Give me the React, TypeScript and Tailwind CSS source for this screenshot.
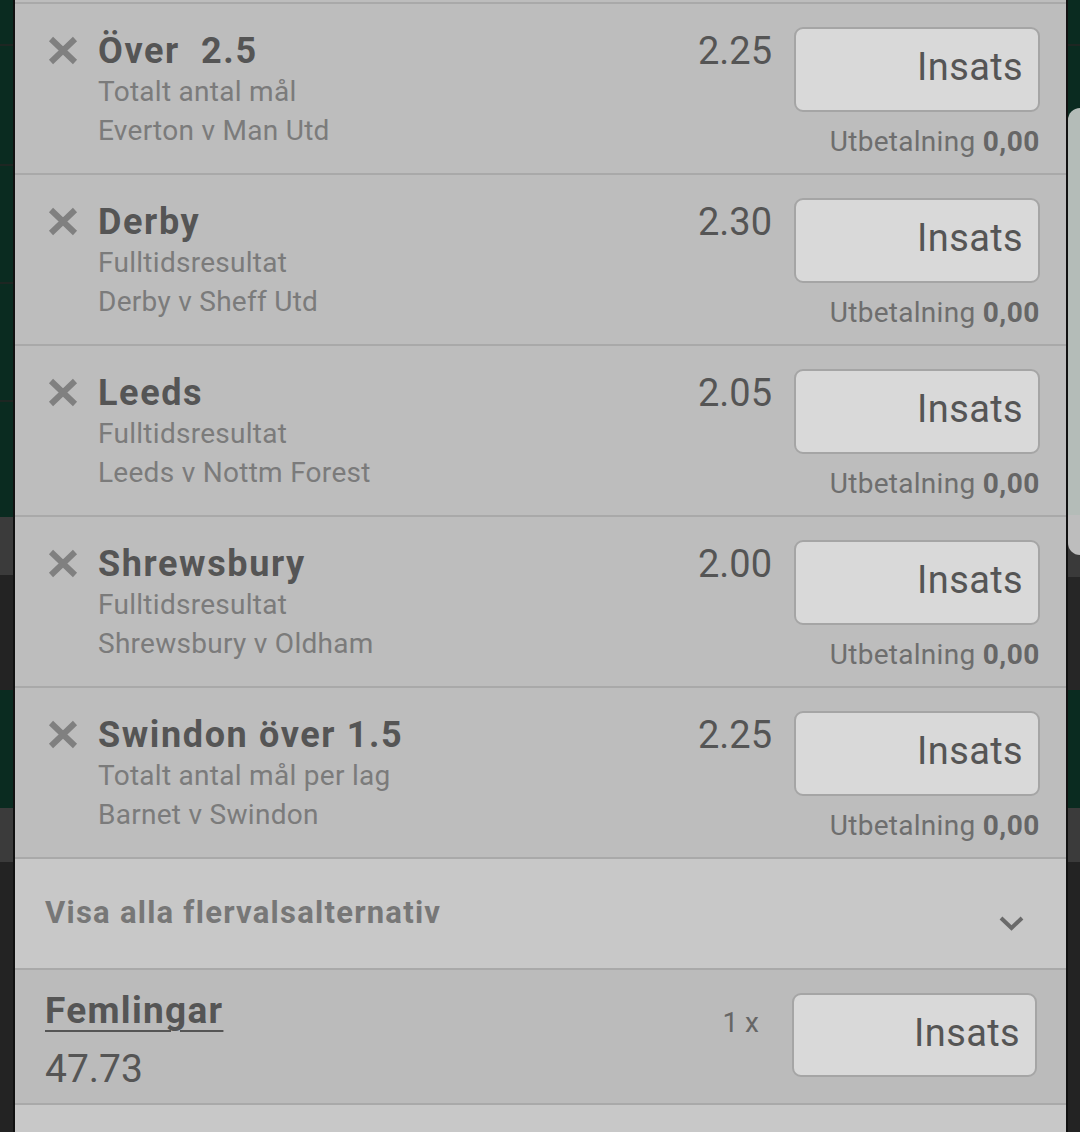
import React from 'react';

interface Selection {
  title: string;
  market: string;
  event: string;
  odds: string;
}

const selections: Selection[] = [
  { title: 'Över  2.5', market: 'Totalt antal mål', event: 'Everton v Man Utd', odds: '2.25' },
  { title: 'Derby', market: 'Fulltidsresultat', event: 'Derby v Sheff Utd', odds: '2.30' },
  { title: 'Leeds', market: 'Fulltidsresultat', event: 'Leeds v Nottm Forest', odds: '2.05' },
  { title: 'Shrewsbury', market: 'Fulltidsresultat', event: 'Shrewsbury v Oldham', odds: '2.00' },
  { title: 'Swindon över 1.5', market: 'Totalt antal mål per lag', event: 'Barnet v Swindon', odds: '2.25' },
];

function RemoveIcon() {
  return (
    <svg width="30" height="29" viewBox="0 0 30 29" className="shrink-0">
      <path d="M3 3 L27 26 M27 3 L3 26" stroke="#808080" strokeWidth="6" fill="none" />
    </svg>
  );
}

function StakeBox({ className = '' }: { className?: string }) {
  return (
    <div
      className={`flex items-center justify-end pr-[15px] pb-[4px] bg-[#d9d9d9] border-2 border-[#a5a5a5] rounded-[9px] ${className}`}
    >
      <span className="text-[38px] tracking-[0.01em] text-[#555555]">Insats</span>
    </div>
  );
}

function SelectionRow({ sel }: { sel: Selection }) {
  return (
    <div className="h-[171px] border-t-2 border-[#a9a9a9] flex items-start pl-[33px] pr-[26px]">
      <div className="mt-[32px]">
        <RemoveIcon />
      </div>
      <div className="ml-[20px] mt-[27px] flex-1 min-w-0">
        <div className="text-[36px] leading-[40px] font-bold tracking-[0.045em] text-[#555555] whitespace-pre">
          {sel.title}
        </div>
        <div className="text-[28px] leading-[39px] tracking-[0.01em] text-[#7b7b7b] mt-[1px]">{sel.market}</div>
        <div className="text-[28px] leading-[39px] tracking-[0.01em] text-[#7b7b7b]">{sel.event}</div>
      </div>
      <div className="mt-[26px] mr-[22px] text-[38px] leading-[42px] text-[#555555]">{sel.odds}</div>
      <div className="mt-[23px] flex flex-col items-end">
        <StakeBox className="w-[246px] h-[85px]" />
        <div className="mt-[14px] text-[28px] leading-[32px] tracking-[0.01em] text-[#6e6e6e]">
          Utbetalning <span className="font-bold tracking-[0.02em] text-[#666666]">0,00</span>
        </div>
      </div>
    </div>
  );
}

export default function App() {
  return (
    <div className="w-[1080px] h-[1132px] overflow-hidden flex font-['Roboto',sans-serif]">
      {/* background page, left edge */}
      <div className="w-[13px] flex flex-col">
        <div className="h-[44px] bg-[#0a2b20]" />
        <div className="h-[2px] bg-[#1d2622]" />
        <div className="h-[118px] bg-[#0a2b20]" />
        <div className="h-[2px] bg-[#1d2622]" />
        <div className="h-[116px] bg-[#0a2b20]" />
        <div className="h-[2px] bg-[#1d2622]" />
        <div className="h-[116px] bg-[#0a2b20]" />
        <div className="h-[2px] bg-[#1d2622]" />
        <div className="h-[115px] bg-[#0a2b20]" />
        <div className="h-[58px] bg-[#3b3b3b]" />
        <div className="h-[115px] bg-[#232323]" />
        <div className="h-[118px] bg-[#0a2b20]" />
        <div className="h-[54px] bg-[#3b3b3b]" />
        <div className="flex-1 bg-[#232323]" />
      </div>

      {/* bet slip */}
      <div className="w-[1055px] h-full border-x-2 border-[#111111] bg-[#bdbdbd] flex flex-col">
        <div className="h-[2px]" />
        {selections.map((sel) => (
          <SelectionRow key={sel.title} sel={sel} />
        ))}

        <div className="h-[111px] border-t-2 border-[#a9a9a9] bg-[#c8c8c8] flex items-start pl-[30px] pr-[42px]">
          <div className="mt-[36px] flex-1 text-[31px] leading-[36px] font-bold tracking-[0.04em] text-[#777777]">
            Visa alla flervalsalternativ
          </div>
          <svg width="25" height="15" viewBox="0 0 25 15" className="mt-[57px]">
            <path d="M2 2 L12.5 12 L23 2" stroke="#6a6a6a" strokeWidth="4" fill="none" />
          </svg>
        </div>

        <div className="h-[135px] border-t-2 border-[#a9a9a9] bg-[#bbbbbb] flex items-start pl-[30px] pr-[29px]">
          <div className="mt-[20px] flex-1">
            <div className="inline-block text-[37px] leading-[42px] font-bold tracking-[0.035em] text-[#555555] underline decoration-2 underline-offset-[7px]">
              Femlingar
            </div>
            <div className="mt-[15px] text-[39px] leading-[44px] text-[#555555]">47.73</div>
          </div>
          <div className="mt-[37px] mr-[33px] text-[28px] leading-[32px] text-[#666666]">1 x</div>
          <StakeBox className="mt-[23px] w-[245px] h-[84px]" />
        </div>

        <div className="flex-1 border-t-2 border-[#a9a9a9] bg-[#c8c8c8]" />
      </div>

      {/* background page, right edge */}
      <div className="flex-1 flex flex-col">
        <div className="h-[44px] bg-[#0a2b20]" />
        <div className="h-[2px] bg-[#1d2622]" />
        <div className="h-[62px] bg-[#0a2b20]" />
        <div className="h-[447px] bg-linear-to-b from-[#0a2b20] from-50% to-[#3a3a3a] to-50%">
          <div className="h-full rounded-l-[13px] overflow-hidden flex flex-col">
            <div className="flex-1 bg-[#b4bcb8]" />
            <div className="h-[40px] bg-[#bdbdbd]" />
          </div>
        </div>
        <div className="h-[22px] bg-[#3a3a3a]" />
        <div className="h-[113px] bg-[#262626]" />
        <div className="h-[118px] bg-[#0a2b20]" />
        <div className="h-[54px] bg-[#3b3b3b]" />
        <div className="flex-1 bg-[#232323]" />
      </div>
    </div>
  );
}
